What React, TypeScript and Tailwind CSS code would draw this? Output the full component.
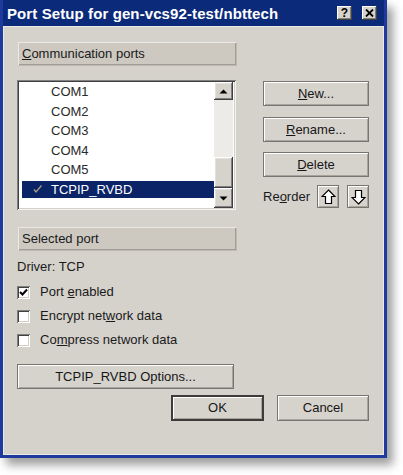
import React from "react";

function Btn({ children, className = "" }: { children: React.ReactNode; className?: string }) {
  return (
    <div
      className={`flex items-center justify-center bg-[#d6d3cd] border border-[#77756f] shadow-[inset_1px_1px_0_#ffffff,inset_-1px_-1px_0_#a7a49e] text-[13px] text-[#161616] ${className}`}
    >
      {children}
    </div>
  );
}

function GroupBar({ children }: { children: React.ReactNode }) {
  return (
    <div className="ml-[1px] h-[23px] flex items-center pl-[4px] bg-[#cdc9c1] shadow-[inset_1px_1px_0_#ebe9e4,inset_-1px_-1px_0_#a29e96,1px_1px_0_#bdb9b1] text-[13px] text-[#1a1a1a]">
      {children}
    </div>
  );
}

function Check({ checked, children }: { checked?: boolean; children: React.ReactNode }) {
  return (
    <div className="h-[24px] flex items-center">
      <div className="w-[13px] h-[13px] bg-white shadow-[inset_1px_1px_0_#808080,inset_-1px_-1px_0_#ffffff,inset_2px_2px_0_#404040,inset_-2px_-2px_0_#d4d0c8] flex items-center justify-center">
        {checked && (
          <svg width="9" height="9" viewBox="0 0 9 9">
            <path d="M1 4 L3.5 6.5 L8 1.5" stroke="#000" strokeWidth="2" fill="none" />
          </svg>
        )}
      </div>
      <span className="ml-[10px] text-[13px] text-[#1a1a1a]">{children}</span>
    </div>
  );
}

function ScrollBtn({ up, className = "" }: { up?: boolean; className?: string }) {
  return (
    <div
      className={`flex items-center justify-center bg-[#d6d3cd] shadow-[inset_-1px_-1px_0_#404040,inset_1px_1px_0_#ffffff,inset_-2px_-2px_0_#808080,inset_2px_2px_0_#e4e1db] ${className}`}
    >
      {up ? (
        <svg width="9" height="5" viewBox="0 0 9 5">
          <path d="M0.5 4.5 L4.5 0.5 L8.5 4.5 Z" fill="#000" />
        </svg>
      ) : (
        <svg width="9" height="5" viewBox="0 0 9 5">
          <path d="M0.5 0.5 L4.5 4.5 L8.5 0.5 Z" fill="#000" />
        </svg>
      )}
    </div>
  );
}

function ArrowBtn({ up }: { up?: boolean }) {
  return (
    <div className="w-[22px] h-[23px] flex items-center justify-center bg-[#d6d3cd] border border-[#77756f] shadow-[inset_1px_1px_0_#ffffff,inset_-1px_-1px_0_#a7a49e]">
      <svg width="15" height="16" viewBox="0 0 15 16">
        {up ? (
          <path d="M7.5 1 L14 7.5 L10.5 7.5 L10.5 14.5 L4.5 14.5 L4.5 7.5 L1 7.5 Z" fill="#fff" stroke="#000" strokeWidth="1.2" strokeLinejoin="miter" />
        ) : (
          <path d="M7.5 15 L14 8.5 L10.5 8.5 L10.5 1.5 L4.5 1.5 L4.5 8.5 L1 8.5 Z" fill="#fff" stroke="#000" strokeWidth="1.2" strokeLinejoin="miter" />
        )}
      </svg>
    </div>
  );
}

export default function App() {
  const items = ["COM1", "COM2", "COM3", "COM4", "COM5"];
  return (
    <div className="w-[403px] h-[475px] bg-white font-['Liberation_Sans',Arial,sans-serif]">
      <div className="w-[387px] h-[458px] flex flex-col bg-[#1d3a9c] border-[3px] border-t-0 border-[#1d3a9c] shadow-[6px_7px_9px_rgba(0,0,0,0.38)]">
        {/* Title bar */}
        <div className="h-[26px] flex items-center bg-[#0c2a7a] pl-[4px] pr-[7px]">
          <span className="text-white font-bold text-[15px] leading-none tracking-[0.1px]">
            Port Setup for gen-vcs92-test/nbttech
          </span>
          <div className="ml-auto flex items-center gap-[10px]">
            <div className="w-[15px] h-[14px] bg-[#d6d3cd] shadow-[inset_-1px_-1px_0_#404040,inset_1px_1px_0_#ffffff,inset_-2px_-2px_0_#808080] flex items-center justify-center text-[12px] font-bold leading-none text-black">
              ?
            </div>
            <div className="w-[15px] h-[14px] bg-[#d6d3cd] shadow-[inset_-1px_-1px_0_#404040,inset_1px_1px_0_#ffffff,inset_-2px_-2px_0_#808080] flex items-center justify-center">
              <svg width="9" height="8" viewBox="0 0 9 8">
                <path d="M1 0.5 L8 7.5 M8 0.5 L1 7.5" stroke="#000" strokeWidth="1.8" />
              </svg>
            </div>
          </div>
        </div>

        {/* Client */}
        <div className="flex-1 flex flex-col bg-[#d5d2cc] border border-[#ebe9e4] pl-[13px] pt-[15px]">
          <div className="flex">
            {/* Left column */}
            <div className="w-[219px] flex flex-col">
              <GroupBar>
                <span>
                  <span className="underline">C</span>ommunication ports
                </span>
              </GroupBar>
              <div className="mt-[15px] h-[130px] flex bg-white p-[2px] shadow-[inset_1px_1px_0_#808080,inset_-1px_-1px_0_#f4f3f0,inset_2px_2px_0_#404040,inset_-2px_-2px_0_#d4d0c8]">
                <div className="flex-1 flex flex-col text-[13px] text-[#2a2a2a]">
                  {items.map((it) => (
                    <div key={it} className="h-[19.5px] shrink-0 flex items-center pl-[32px]">
                      {it}
                    </div>
                  ))}
                  <div className="h-[19.5px] shrink-0 flex items-center">
                    <div className="ml-[3px] w-full h-[17px] bg-[#0b2468] flex items-center text-white">
                      <svg className="ml-[11px]" width="9" height="8" viewBox="0 0 9 8">
                        <path d="M1 4.5 L3 7 L8.5 0.5" stroke="#a5a082" strokeWidth="1.3" fill="none" />
                      </svg>
                      <span className="ml-[9px]">TCPIP_RVBD</span>
                    </div>
                  </div>
                </div>
                <div className="w-[19px] mr-[1px] flex flex-col">
                  <ScrollBtn up className="h-[18px]" />
                  <div className="h-[57px] bg-[#ecebe7]" />
                  <div className="h-[31px] bg-[#d6d3cd] shadow-[inset_-1px_-1px_0_#404040,inset_1px_1px_0_#ffffff,inset_-2px_-2px_0_#808080,inset_2px_2px_0_#e4e1db]" />
                  <ScrollBtn className="h-[20px]" />
                </div>
              </div>
            </div>

            {/* Right column */}
            <div className="ml-[27px] w-[106px] flex flex-col pt-[39px]">
              <Btn className="h-[25px]">
                <span>
                  <span className="underline">N</span>ew...
                </span>
              </Btn>
              <Btn className="h-[25px] mt-[11px]">
                <span>
                  <span className="underline">R</span>ename...
                </span>
              </Btn>
              <Btn className="h-[25px] mt-[10px]">
                <span>
                  <span className="underline">D</span>elete
                </span>
              </Btn>
              <div className="mt-[8px] flex items-center">
                <span className="text-[13px] text-[#1a1a1a]">
                  Re<span className="underline">o</span>rder
                </span>
                <div className="ml-auto flex gap-[8px]">
                  <ArrowBtn up />
                  <ArrowBtn />
                </div>
              </div>
            </div>
          </div>

          {/* Selected port */}
          <div className="w-[219px] mt-[17px]">
            <GroupBar>Selected port</GroupBar>
          </div>
          <div className="mt-[8px] h-[17px] flex items-center text-[13px] text-[#1a1a1a]">Driver: TCP</div>
          <div className="mt-[5px] flex flex-col">
            <Check checked>
              Port <span className="underline">e</span>nabled
            </Check>
            <Check>
              Encrypt net<span className="underline">w</span>ork data
            </Check>
            <Check>
              Co<span className="underline">m</span>press network data
            </Check>
          </div>
          <Btn className="mt-[12px] w-[217px] h-[25px]">TCPIP_RVBD Options...</Btn>
          <div className="mt-[6px] flex justify-end pr-[14px] gap-[13px]">
            <div className="w-[93px] h-[26px] flex items-center justify-center bg-[#d6d3cd] border-2 border-[#3d3c3a] shadow-[inset_1px_1px_0_#ffffff,inset_-1px_-1px_0_#a7a49e] text-[13px] text-[#161616]">
              OK
            </div>
            <Btn className="w-[92px] h-[26px]">Cancel</Btn>
          </div>
        </div>
      </div>
    </div>
  );
}
